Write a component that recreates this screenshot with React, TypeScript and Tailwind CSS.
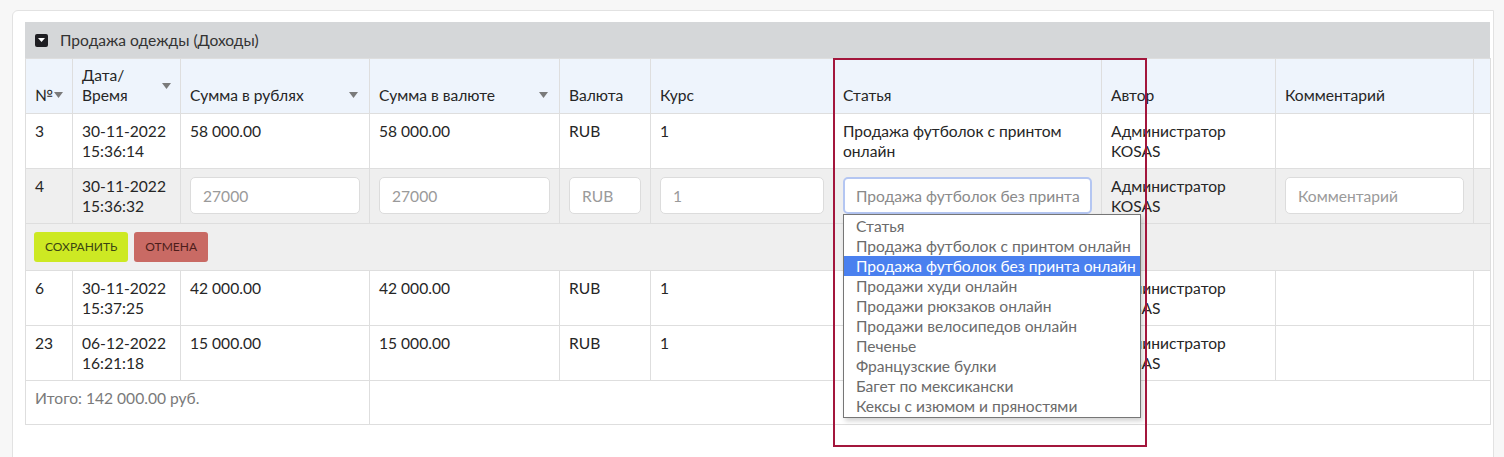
import { useState } from "react";

type Row = {
  id: number;
  date: string;
  time: string;
  rub: string;
  cur: string;
  currency: string;
  rate: string;
  article: string;
};

const ROWS_TOP: Row[] = [
  {
    id: 3,
    date: "30-11-2022",
    time: "15:36:14",
    rub: "58 000.00",
    cur: "58 000.00",
    currency: "RUB",
    rate: "1",
    article: "Продажа футболок с принтом онлайн",
  },
];

const ROWS_BOTTOM: Row[] = [
  {
    id: 6,
    date: "30-11-2022",
    time: "15:37:25",
    rub: "42 000.00",
    cur: "42 000.00",
    currency: "RUB",
    rate: "1",
    article: "",
  },
  {
    id: 23,
    date: "06-12-2022",
    time: "16:21:18",
    rub: "15 000.00",
    cur: "15 000.00",
    currency: "RUB",
    rate: "1",
    article: "",
  },
];

const OPTIONS = [
  "Статья",
  "Продажа футболок с принтом онлайн",
  "Продажа футболок без принта онлайн",
  "Продажи худи онлайн",
  "Продажи рюкзаков онлайн",
  "Продажи велосипедов онлайн",
  "Печенье",
  "Французские булки",
  "Багет по мексикански",
  "Кексы с изюмом и пряностями",
];

function Caret() {
  return (
    <svg width="9" height="6" viewBox="0 0 9 6" className="block shrink-0">
      <path d="M0 0h9L4.5 6z" fill="#7a7a7a" />
    </svg>
  );
}

const td = "border border-[#dedede] px-[9px] pt-[7px] align-top";
const tdInput = "border border-[#dedede] px-[9px] pt-[8px] align-top";
const th = "border border-[#dedede] px-[9px] pb-[8px] align-bottom font-normal text-left";
const input =
  "w-full h-[37px] rounded-[5px] border border-[#dcdcdc] bg-white px-[12px] text-[15.6px] text-[#333] placeholder:text-[#9a9a9a] outline-none";

function DataRow({ r }: { r: Row }) {
  return (
    <tr className="h-[55px] bg-white">
      <td className={td}>{r.id}</td>
      <td className={td}>
        {r.date}
        <br />
        {r.time}
      </td>
      <td className={td}>{r.rub}</td>
      <td className={td}>{r.cur}</td>
      <td className={td}>{r.currency}</td>
      <td className={td}>{r.rate}</td>
      <td className={td}>{r.article}</td>
      <td className={td}>
        Администратор
        <br />
        KOSAS
      </td>
      <td className={td}></td>
      <td className={td}></td>
    </tr>
  );
}

export default function App() {
  const [selected] = useState(2);

  return (
    <div className="min-h-[457px] bg-[#f7f7f7] pt-[10px] pl-[12px] pr-[10px] font-['Lato','Noto_Sans',sans-serif] text-[15.6px] leading-[20px] text-[#262626]">
      <div className="relative h-[460px] rounded-tl-[6px] border border-[#e2e2e2] bg-white px-[12px] pt-[11px]">
        {/* section title */}
        <div className="flex h-[36px] w-[1465px] items-center gap-[12px] bg-[#d5d7d9] px-[10px]">
          <span className="flex h-[13px] w-[13px] items-center justify-center rounded-[2px] bg-[#1e1e22]">
            <svg width="7" height="4" viewBox="0 0 7 4">
              <path d="M0 0h7L3.5 4z" fill="#fff" />
            </svg>
          </span>
          <span className="text-[#333]">Продажа одежды (Доходы)</span>
        </div>

        <table className="w-[1465px] table-fixed border-collapse">
          <colgroup>
            <col className="w-[47px]" />
            <col className="w-[108px]" />
            <col className="w-[189px]" />
            <col className="w-[190px]" />
            <col className="w-[91px]" />
            <col className="w-[183px]" />
            <col className="w-[268px]" />
            <col className="w-[174px]" />
            <col className="w-[198px]" />
            <col className="w-[17px]" />
          </colgroup>
          <thead>
            <tr className="h-[55px] bg-[#eef4fc]">
              <th className={th}>
                <span className="flex items-center gap-[1px]">
                  №<Caret />
                </span>
              </th>
              <th className={th}>
                <div className="flex items-start justify-between">
                  <span>
                    Дата/
                    <br />
                    Время
                  </span>
                  <span className="mt-[18px] block">
                    <Caret />
                  </span>
                </div>
              </th>
              <th className={th}>
                <div className="flex items-center justify-between pr-[2px]">
                  Сумма в рублях <Caret />
                </div>
              </th>
              <th className={th}>
                <div className="flex items-center justify-between pr-[2px]">
                  Сумма в валюте <Caret />
                </div>
              </th>
              <th className={th}>Валюта</th>
              <th className={th}>Курс</th>
              <th className={th}>Статья</th>
              <th className={th}>Автор</th>
              <th className={th}>Комментарий</th>
              <th className={th}></th>
            </tr>
          </thead>
          <tbody>
            {ROWS_TOP.map((r) => (
              <DataRow key={r.id} r={r} />
            ))}

            {/* editing row */}
            <tr className="h-[55px] bg-[#efefef]">
              <td className={td}>4</td>
              <td className={td}>
                30-11-2022
                <br />
                15:36:32
              </td>
              <td className={tdInput}>
                <input className={input} placeholder="27000" />
              </td>
              <td className={tdInput}>
                <input className={input} placeholder="27000" />
              </td>
              <td className={tdInput}>
                <input className={input} placeholder="RUB" />
              </td>
              <td className={tdInput}>
                <input className={input} placeholder="1" />
              </td>
              <td className={tdInput}>
                <div className="relative">
                  <div className="flex h-[37px] w-full items-center whitespace-nowrap rounded-[5px] border-2 border-[#b4c6f2] bg-white px-[11px] text-[#8a8a8a]">
                    Продажа футболок без принта
                  </div>
                  <ul className="absolute left-0 top-[37px] z-10 w-[298px] border border-[#767676] bg-white py-[1px] shadow-[2px_3px_5px_rgba(0,0,0,0.18)]">
                    {OPTIONS.map((o, i) => (
                      <li
                        key={o}
                        className={`h-[20px] whitespace-nowrap px-[12px] leading-[20px] ${
                          i === selected ? "bg-[#4a80ef] text-white" : "text-[#6b6b6b]"
                        }`}
                      >
                        {o}
                      </li>
                    ))}
                  </ul>
                </div>
              </td>
              <td className={td}>
                Администратор
                <br />
                KOSAS
              </td>
              <td className={tdInput}>
                <input className={input} placeholder="Комментарий" />
              </td>
              <td className={td}></td>
            </tr>

            {/* actions row */}
            <tr className="h-[47px] bg-[#efefef]">
              <td colSpan={10} className="border border-[#dedede] px-[8px] align-middle">
                <div className="flex gap-[6px]">
                  <button className="h-[30px] rounded-[3px] bg-[#cde923] px-[11px] text-[12px] uppercase text-[#3b4512]">
                    Сохранить
                  </button>
                  <button className="h-[30px] rounded-[3px] bg-[#c96a64] px-[11px] text-[12px] uppercase text-[#4c1d1a]">
                    Отмена
                  </button>
                </div>
              </td>
            </tr>

            {ROWS_BOTTOM.map((r) => (
              <DataRow key={r.id} r={r} />
            ))}

            <tr className="h-[44px] bg-white">
              <td colSpan={3} className={`${td} text-[#7a7a7a]`}>
                Итого: 142 000.00 руб.
              </td>
              <td colSpan={7} className={td}></td>
            </tr>
          </tbody>
        </table>

        {/* highlight frame */}
        <div className="pointer-events-none absolute left-[820px] top-[47px] z-20 h-[389px] w-[314px] border-2 border-[#a3163c]" />
      </div>
    </div>
  );
}
